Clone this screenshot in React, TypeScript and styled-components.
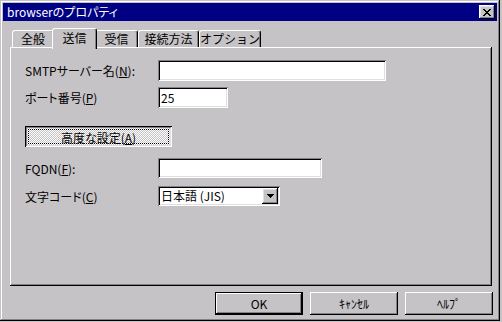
import React from 'react'
import styled, { createGlobalStyle } from 'styled-components'

const gray = '#c6c3c6'
const dark = '#848284'
const light = '#dedfde'
const navy = '#000084'

const GlobalStyle = createGlobalStyle`
  html, body {
    margin: 0;
    padding: 0;
    background: ${gray};
  }
  body {
    font-family: 'Noto Sans CJK JP', 'Liberation Sans', sans-serif;
    font-size: 12px;
    color: #000;
  }
`

const raisedBevel = `
  box-shadow: inset -1px -1px #000, inset 1px 1px #fff,
    inset -2px -2px ${dark}, inset 2px 2px ${light};
`

const sunkenBevel = `
  box-shadow: inset 1px 1px ${dark}, inset -1px -1px #fff,
    inset 2px 2px #000, inset -2px -2px ${light};
`

const Window = styled.div`
  width: 500px;
  height: 321px;
  box-sizing: border-box;
  padding: 3px;
  background: ${gray};
  box-shadow: inset -1px -1px #000, inset 1px 1px ${gray},
    inset -2px -2px ${dark}, inset 2px 2px #fff;
  display: flex;
  flex-direction: column;
`

const TitleBar = styled.div`
  height: 18px;
  background: ${navy};
  display: flex;
  align-items: center;
  justify-content: space-between;
  padding: 0 2px 0 4px;
`

const Title = styled.span`
  color: #fff;
  font-size: 12px;
  line-height: 18px;
  font-feature-settings: 'palt';
`

const CloseButton = styled.div`
  width: 16px;
  height: 14px;
  box-sizing: border-box;
  background: ${gray};
  ${raisedBevel}
  display: flex;
  align-items: center;
  justify-content: center;
`

const TabStrip = styled.div`
  display: flex;
  align-items: flex-end;
  height: 19px;
  margin: 7px 0 0 9px;
`

const Tab = styled.div<{ $w: number; $active?: boolean }>`
  position: relative;
  width: ${p => p.$w + (p.$active ? 4 : 0)}px;
  height: ${p => (p.$active ? 21 : 17)}px;
  margin: ${p => (p.$active ? '0 -2px -2px' : '0')};
  z-index: ${p => (p.$active ? 2 : 1)};
  box-sizing: border-box;
  background: ${gray};
  border-top: 1px solid #fff;
  border-left: 1px solid #fff;
  border-right: 1px solid #000;
  border-radius: 3px 3px 0 0;
  box-shadow: inset -1px 0 ${dark};
  display: flex;
  justify-content: center;
  padding-top: ${p => (p.$active ? 1 : 0)}px;
  line-height: 15px;
  white-space: nowrap;
`

const Panel = styled.div`
  width: 482px;
  height: 239px;
  box-sizing: border-box;
  margin-left: 7px;
  padding: 13px 0 0 15px;
  box-shadow: inset -1px -1px #000, inset 1px 1px #fff,
    inset -2px -2px ${dark};
  display: flex;
  flex-direction: column;
`

const Row = styled.div<{ $mt?: number }>`
  display: flex;
  align-items: center;
  margin-top: ${p => p.$mt || 0}px;
`

const Label = styled.label`
  width: 133px;
  white-space: nowrap;
  font-feature-settings: 'palt';
`

const Field = styled.div<{ $w: number; $h: number }>`
  width: ${p => p.$w}px;
  height: ${p => p.$h}px;
  box-sizing: border-box;
  background: #fff;
  ${sunkenBevel}
  padding: 0 3px;
  display: flex;
  align-items: center;
  line-height: 1;
`

const Combo = styled(Field)`
  padding-right: 2px;
  justify-content: space-between;
`

const DropButton = styled.div`
  width: 16px;
  height: 16px;
  box-sizing: border-box;
  background: ${gray};
  ${raisedBevel}
  display: flex;
  align-items: center;
  justify-content: center;
`

const AdvancedButton = styled.div`
  width: 147px;
  height: 21px;
  box-sizing: border-box;
  background: repeating-conic-gradient(#fff 0 25%, ${gray} 0 50%) 0 0 / 2px 2px;
  box-shadow: inset 1px 1px #000, inset -1px -1px #fff,
    inset 2px 2px ${dark}, inset -2px -2px ${light};
  outline: 1px dotted #000;
  outline-offset: -4px;
  display: flex;
  align-items: center;
  justify-content: center;
  padding-top: 1px;
  font-feature-settings: 'palt';
`

const ButtonRow = styled.div`
  display: flex;
  justify-content: flex-end;
  gap: 7px;
  margin: 6px 4px 0 0;
`

const Button = styled.div<{ $default?: boolean }>`
  width: 88px;
  height: 23px;
  box-sizing: border-box;
  background: ${gray};
  ${p =>
    p.$default
      ? `box-shadow: inset 0 0 0 1px #000, inset -2px -2px #000, inset 2px 2px #fff, inset -3px -3px ${dark};`
      : `box-shadow: inset -1px -1px #000, inset 1px 1px #fff, inset -2px -2px ${dark};`}
  display: flex;
  align-items: center;
  justify-content: center;
`

const CloseGlyph = () => (
  <svg width="8" height="7" viewBox="0 0 8 7" shapeRendering="crispEdges">
    <path
      d="M0 0h2v1h-2zM6 0h2v1h-2zM1 1h2v1h-2zM5 1h2v1h-2zM2 2h4v1h-4zM3 3h2v1h-2zM2 4h4v1h-4zM1 5h2v1h-2zM5 5h2v1h-2zM0 6h2v1h-2zM6 6h2v1h-2z"
      fill="#000"
    />
  </svg>
)

const DownArrow = () => (
  <svg width="7" height="4" viewBox="0 0 7 4" shapeRendering="crispEdges">
    <path d="M0 0h7v1h-7zM1 1h5v1h-5zM2 2h3v1h-3zM3 3h1v1h-1z" fill="#000" />
  </svg>
)

const tabs = [
  { label: '全般', w: 42 },
  { label: '送信', w: 41, active: true },
  { label: '受信', w: 43 },
  { label: '接続方法', w: 61 },
  { label: 'オプション', w: 62 },
]

export default function App() {
  return (
    <>
      <GlobalStyle />
      <Window>
        <TitleBar>
          <Title>browserのプロパティ</Title>
          <CloseButton>
            <CloseGlyph />
          </CloseButton>
        </TitleBar>
        <TabStrip>
          {tabs.map(t => (
            <Tab key={t.label} $w={t.w} $active={t.active}>
              {t.label}
            </Tab>
          ))}
        </TabStrip>
        <Panel>
          <Row>
            <Label>
              SMTPサーバー名(<u>N</u>):
            </Label>
            <Field $w={228} $h={21} />
          </Row>
          <Row $mt={6}>
            <Label>
              ポート番号(<u>P</u>)
            </Label>
            <Field $w={70} $h={21}>
              25
            </Field>
          </Row>
          <Row $mt={18}>
            <AdvancedButton>
              高度な設定(<u>A</u>)
            </AdvancedButton>
          </Row>
          <Row $mt={11}>
            <Label>
              FQDN(<u>F</u>):
            </Label>
            <Field $w={164} $h={20} />
          </Row>
          <Row $mt={8}>
            <Label>
              文字コード(<u>C</u>)
            </Label>
            <Combo $w={122} $h={20}>
              <span>日本語 (JIS)</span>
              <DropButton>
                <DownArrow />
              </DropButton>
            </Combo>
          </Row>
        </Panel>
        <ButtonRow>
          <Button $default>OK</Button>
          <Button>ｷｬﾝｾﾙ</Button>
          <Button>ﾍﾙﾌﾟ</Button>
        </ButtonRow>
      </Window>
    </>
  )
}
